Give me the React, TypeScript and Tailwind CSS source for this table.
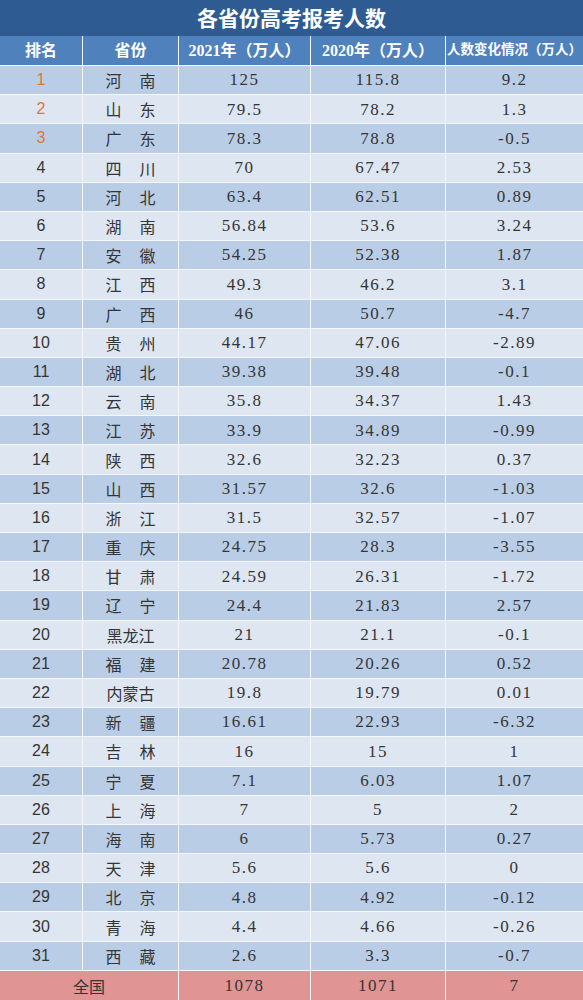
const rows: [string, string, string, string][] = [
  ["河南", "125", "115.8", "9.2"],
  ["山东", "79.5", "78.2", "1.3"],
  ["广东", "78.3", "78.8", "-0.5"],
  ["四川", "70", "67.47", "2.53"],
  ["河北", "63.4", "62.51", "0.89"],
  ["湖南", "56.84", "53.6", "3.24"],
  ["安徽", "54.25", "52.38", "1.87"],
  ["江西", "49.3", "46.2", "3.1"],
  ["广西", "46", "50.7", "-4.7"],
  ["贵州", "44.17", "47.06", "-2.89"],
  ["湖北", "39.38", "39.48", "-0.1"],
  ["云南", "35.8", "34.37", "1.43"],
  ["江苏", "33.9", "34.89", "-0.99"],
  ["陕西", "32.6", "32.23", "0.37"],
  ["山西", "31.57", "32.6", "-1.03"],
  ["浙江", "31.5", "32.57", "-1.07"],
  ["重庆", "24.75", "28.3", "-3.55"],
  ["甘肃", "24.59", "26.31", "-1.72"],
  ["辽宁", "24.4", "21.83", "2.57"],
  ["黑龙江", "21", "21.1", "-0.1"],
  ["福建", "20.78", "20.26", "0.52"],
  ["内蒙古", "19.8", "19.79", "0.01"],
  ["新疆", "16.61", "22.93", "-6.32"],
  ["吉林", "16", "15", "1"],
  ["宁夏", "7.1", "6.03", "1.07"],
  ["上海", "7", "5", "2"],
  ["海南", "6", "5.73", "0.27"],
  ["天津", "5.6", "5.6", "0"],
  ["北京", "4.8", "4.92", "-0.12"],
  ["青海", "4.4", "4.66", "-0.26"],
  ["西藏", "2.6", "3.3", "-0.7"],
];

const serif = "font-['Liberation_Serif','Noto_Sans_CJK_SC',serif]";
const cjk = "font-['Noto_Sans_CJK_SC',sans-serif]";
const num = `text-[17px] tracking-[1.5px] text-[#353535] ${serif}`;

export default function App() {
  return (
    <div className="w-[583px] h-[1000px] overflow-hidden bg-white">
      {/* Title */}
      <div className={`h-[36px] bg-[#2e5b91] flex items-center justify-center text-white text-[21px] font-bold ${cjk}`}>
        各省份高考报考人数
      </div>

      <div className="grid grid-cols-[82px_95px_131px_134px_1fr] gap-px bg-[#f4f7fb]">
        {/* Header */}
        {["排名", "省份", "2021年（万人）", "2020年（万人）", "人数变化情况（万人）"].map((h, i) => (
          <div
            key={h}
            className={`h-[29px] bg-[#4f81bd] flex items-center justify-center text-white font-bold whitespace-nowrap ${serif} ${
              i === 4 ? "text-[13.5px]" : "text-[16px]"
            }`}
          >
            {h}
          </div>
        ))}

        {/* Rows */}
        {rows.map(([name, a, b, c], idx) => {
          const bg = idx % 2 === 0 ? "bg-[#bacde6]" : "bg-[#dde6f1]";
          const rank = idx + 1;
          return [
            <div
              key={`r${idx}`}
              className={`h-[28.2px] ${bg} flex items-center justify-center text-[16px] font-['Liberation_Sans',sans-serif] ${
                rank <= 3 ? "text-[#e0782c]" : "text-[#353535]"
              }`}
            >
              {rank}
            </div>,
            <div
              key={`n${idx}`}
              className={`h-[28.2px] ${bg} flex items-center justify-center text-[16px] text-[#353535] ${cjk} ${
                name.length === 2 ? "gap-[18px]" : ""
              }`}
            >
              {name.split("").map((ch, k) => (
                <span key={k}>{ch}</span>
              ))}
            </div>,
            <div key={`a${idx}`} className={`h-[28.2px] ${bg} flex items-center justify-center ${num}`}>
              {a}
            </div>,
            <div key={`b${idx}`} className={`h-[28.2px] ${bg} flex items-center justify-center ${num}`}>
              {b}
            </div>,
            <div key={`c${idx}`} className={`h-[28.2px] ${bg} flex items-center justify-center ${num}`}>
              {c}
            </div>,
          ];
        })}

        {/* Total */}
        <div className={`col-span-2 h-[30px] bg-[#e09494] flex items-center justify-center text-[16px] text-[#353535] ${cjk}`}>
          全国
        </div>
        <div className={`h-[30px] bg-[#e09494] flex items-center justify-center ${num}`}>1078</div>
        <div className={`h-[30px] bg-[#e09494] flex items-center justify-center ${num}`}>1071</div>
        <div className={`h-[30px] bg-[#e09494] flex items-center justify-center ${num}`}>7</div>
      </div>
    </div>
  );
}
